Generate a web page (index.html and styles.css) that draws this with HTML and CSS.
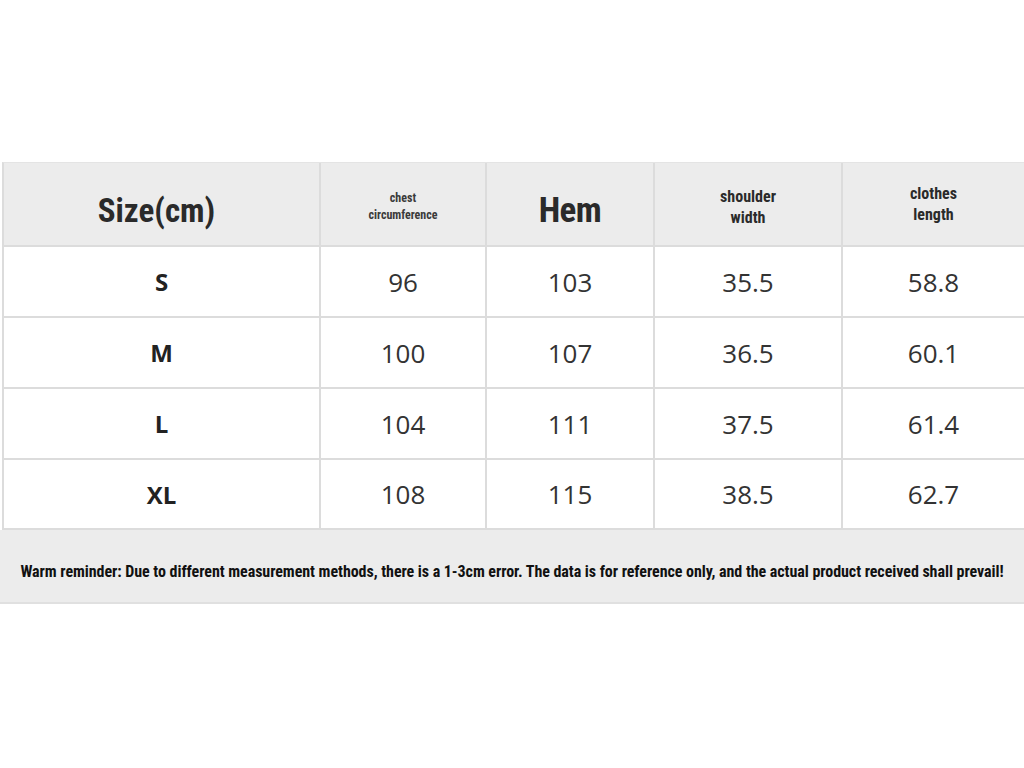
FILE: index.html
```html
<!DOCTYPE html>
<html>
<head>
<meta charset="utf-8">
<link rel="stylesheet" href="styles.css">
</head>
<body>
<div class="page">
  <div class="table">
    <div class="cell head"><span class="h-big h-size">Size(cm)</span></div>
    <div class="cell head"><span class="h-tiny">chest<br>circumference</span></div>
    <div class="cell head"><span class="h-big h-hem">Hem</span></div>
    <div class="cell head"><span class="h-mid">shoulder<br>width</span></div>
    <div class="cell head last"><span class="h-mid up">clothes<br>length</span></div>

    <div class="cell size">S</div><div class="cell">96</div><div class="cell">103</div><div class="cell">35.5</div><div class="cell last">58.8</div>
    <div class="cell size">M</div><div class="cell">100</div><div class="cell">107</div><div class="cell">36.5</div><div class="cell last">60.1</div>
    <div class="cell size">L</div><div class="cell">104</div><div class="cell">111</div><div class="cell">37.5</div><div class="cell last">61.4</div>
    <div class="cell size">XL</div><div class="cell">108</div><div class="cell">115</div><div class="cell">38.5</div><div class="cell last">62.7</div>
  </div>
  <div class="note">Warm reminder: Due to different measurement methods, there is a 1-3cm error. The data is for reference only, and the actual product received shall prevail!</div>
</div>
</body>
</html>
```

FILE: styles.css
```css
html, body {
  margin: 0;
  padding: 0;
  background: #ffffff;
}
.page {
  width: 1024px;
  height: 768px;
  padding-top: 162px;
  box-sizing: border-box;
}
.table {
  display: grid;
  grid-template-columns: 317px 166px 168px 188px 1fr;
  grid-template-rows: 84px 71px 71px 71px 70px;
  margin-left: 2px;
  border-left: 2px solid #dcdcdc;
  border-top: 1px solid #e4e4e4;
}
.cell {
  display: flex;
  align-items: center;
  justify-content: center;
  text-align: center;
  border-right: 2px solid #dcdcdc;
  border-bottom: 2px solid #dcdcdc;
  font-family: "Open Sans", "Noto Sans", sans-serif;
  font-size: 26px;
  color: #333333;
  background: #ffffff;
}
.cell.last {
  border-right: none;
}
.cell.head {
  background: #ececec;
  font-family: "Liberation Sans Narrow", "Roboto Condensed", "Roboto", sans-serif;
  color: #2a2a2a;
}
.h-big {
  font-size: 33px;
  font-weight: 700;
  padding-top: 12px;
}
.h-size {
  margin-right: 10px;
}
.h-hem {
  font-size: 35px;
  letter-spacing: -0.5px;
}
.h-tiny {
  font-size: 12px;
  line-height: 17px;
  font-weight: 700;
  color: #3a3a3a;
  padding-top: 5px;
}
.h-mid {
  font-size: 16px;
  line-height: 21px;
  font-weight: 700;
  padding-top: 6px;
}
.h-mid.up {
  padding-top: 0;
}
.cell.size {
  font-weight: 700;
  font-size: 24px;
  color: #222222;
}
.note {
  height: 74px;
  padding-top: 10px;
  box-sizing: border-box;
  background: #ececec;
  border-bottom: 2px solid #e0e0e0;
  display: flex;
  align-items: center;
  justify-content: center;
  font-family: "Liberation Sans Narrow", "Roboto Condensed", "Roboto", sans-serif;
  font-size: 16px;
  font-weight: 700;
  letter-spacing: -0.05px;
  color: #111111;
  white-space: nowrap;
}
```
